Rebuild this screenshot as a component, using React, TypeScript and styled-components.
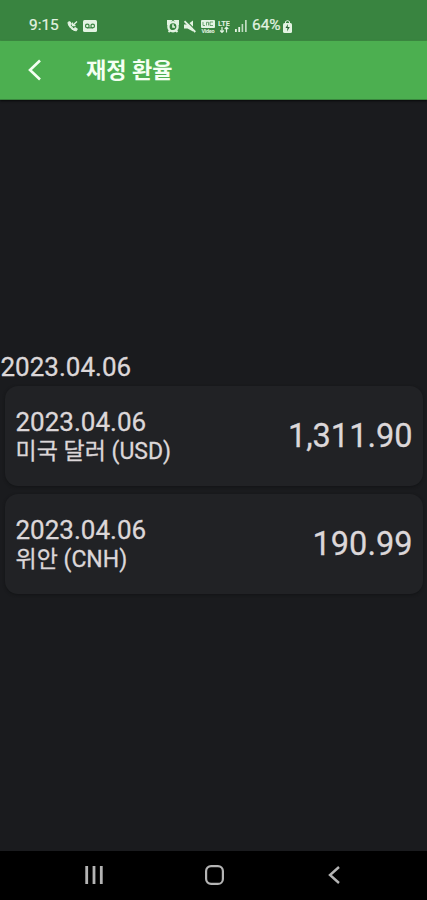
import React from "react";
import styled, { createGlobalStyle } from "styled-components";

const GlobalStyle = createGlobalStyle`
  * { box-sizing: border-box; }
  body { margin: 0; background: #1a1b1e; }
`;

const Screen = styled.div`
  width: 100%;
  height: 900px;
  display: flex;
  flex-direction: column;
  background: #1a1b1e;
  color: #dcd7d9;
  font-family: Roboto, "Noto Sans CJK KR", sans-serif;
  overflow: hidden;
`;

const StatusBar = styled.div`
  height: 41px;
  flex: none;
  padding: 11px 0 0 29px;
  display: flex;
  background: #398440;
  border-bottom: 1px solid #3f9144;
  color: #e3f3e2;
`;

const StatusGroup = styled.div<{ $width: number }>`
  width: ${(p) => p.$width}px;
  height: 30px;
  display: flex;
  align-items: center;
`;

const StatusText = styled.span<{ $width: number }>`
  width: ${(p) => p.$width}px;
  flex: none;
  font-size: 15.4px;
  line-height: 29px;
  height: 30px;
  white-space: nowrap;
  -webkit-text-stroke: 0.2px currentColor;
`;

const StatusIcon = styled.svg<{ $gap?: number }>`
  display: block;
  flex: none;
  margin-right: ${(p) => p.$gap ?? 0}px;
`;

const AppBar = styled.header`
  height: 59px;
  flex: none;
  display: flex;
  align-items: center;
  padding-left: 27px;
  background: #4caf50;
  border-bottom: 1px solid #3a873e;
  color: #f4fff2;
  box-shadow: 0 1px 2px #08090a;
`;

const BackButton = styled.button`
  width: 59px;
  height: 40px;
  padding: 0;
  border: 0;
  background: none;
  color: inherit;
  display: flex;
  align-items: center;
`;

const Title = styled.h1`
  margin: 2px 0 0;
  font-size: 22px;
  line-height: 30px;
  font-weight: 700;
  white-space: nowrap;
`;

const Content = styled.main`
  flex: 1;
  display: flex;
  flex-direction: column;
  padding: 251px 4px 0 5px;
  -webkit-text-stroke: 0.3px currentColor;
`;

const DateHeading = styled.div`
  height: 35px;
  margin-left: -4.5px;
  font-size: 26px;
  line-height: 33px;
`;

const Cards = styled.div`
  display: flex;
  flex-direction: column;
  gap: 8px;
`;

const Card = styled.section`
  height: 100px;
  border-radius: 13px;
  padding: 21px 10.5px 0 10.5px;
  display: flex;
  justify-content: space-between;
  background: #212225;
  box-shadow: 0 1px 3px #131416;
`;

const RateDate = styled.div`
  font-size: 26px;
  line-height: 30px;
  height: 29px;
`;

const RateName = styled.div`
  font-size: 23px;
  line-height: 32px;
  white-space: nowrap;
`;

const RateValue = styled.div`
  font-size: 32.5px;
  line-height: 58px;
`;

const NavBar = styled.nav`
  height: 49px;
  flex: none;
  display: grid;
  grid-template-columns: 120px 120px 120px;
  justify-content: center;
  justify-items: center;
  align-items: center;
  padding: 0 0 2px 1px;
  background: #000;
  color: #b4b4b4;
`;

const NavButton = styled.button`
  padding: 0;
  border: 0;
  background: none;
  color: inherit;
  display: flex;
`;

const rates = [
  { date: "2023.04.06", name: "미국 달러 (USD)", value: "1,311.90" },
  { date: "2023.04.06", name: "위안 (CNH)", value: "190.99" },
];

const CallIcon = () => (
  <StatusIcon $gap={4} width="13" height="13" viewBox="0 0 13 13" fill="none" stroke="currentColor">
    <path d="M2 2.2c-.2 3.9 4.5 8.8 8.5 8.6l.8-2-2.2-1.3-1.3 1.2C6.3 7.9 5.2 6.7 4.4 5.3l1-1.3L4.1 1.7z" fill="currentColor" strokeWidth="1" />
    <path d="M6.500 5.500L11 1.500M6.500 2.500v3h3" strokeWidth="1.300" />
  </StatusIcon>
);

const VoicemailIcon = () => (
  <StatusIcon width="14" height="12" viewBox="0 0 14 12">
    <rect width="14" height="12" rx="1.500" fill="currentColor" />
    <g fill="none" stroke="#398440" strokeWidth="1.200">
      <circle cx="4.300" cy="6" r="1.800" />
      <circle cx="9.700" cy="6" r="1.800" />
      <path d="M4.300 7.800h5.400" />
    </g>
  </StatusIcon>
);

const AlarmIcon = () => (
  <StatusIcon $gap={5} width="12" height="13" viewBox="0 0 12 13">
    <path d="M.5 1h3l-3 3zM11.500 1h-3l3 3zM1.500 12l2-2M10.500 12l-2-2" fill="currentColor" stroke="currentColor" strokeWidth="1.800" />
    <circle cx="6" cy="6.700" r="4.600" fill="#398440" stroke="currentColor" strokeWidth="2.400" />
    <path d="M6 4.200v2.800h2" fill="none" stroke="currentColor" strokeWidth="1.600" />
  </StatusIcon>
);

const MuteIcon = () => (
  <StatusIcon $gap={5} width="12" height="13" viewBox="0 0 12 13">
    <path d="M0 4.500h3.500l5.500-4v11L3.500 8.500H0z" fill="currentColor" />
    <path d="M2.500 1l9.500 9.500" stroke="#398440" strokeWidth="1.200" />
    <path d="M.5 1.200L11.300 12" stroke="currentColor" strokeWidth="1.800" />
  </StatusIcon>
);

const VideoIcon = () => (
  <StatusIcon $gap={3} width="14" height="13" viewBox="0 0 14 13">
    <rect width="14" height="8" rx="1" fill="currentColor" />
    <path d="M2 2v3.500h2M5.500 5.500V2.300h2v3.200M9 2v3.500h3M9 2h3" fill="none" stroke="#398440" strokeWidth=".7" />
    <text x="7" y="13" textAnchor="middle" fontSize="5.500" fontWeight="700" fill="currentColor" fontFamily="Roboto" textLength="13">Video</text>
  </StatusIcon>
);

const LteIcon = () => (
  <StatusIcon $gap={5} width="12" height="14" viewBox="0 0 12 14">
    <text x="0" y="6.500" fontSize="7.500" fontWeight="700" fill="currentColor" fontFamily="Roboto" textLength="12">LTE</text>
    <path d="M4 8v5.500M2.200 11.500L4 13.400l1.800-1.900M8.500 13.500V8M6.700 10l1.800-1.900L10.300 10" stroke="currentColor" strokeWidth="1.200" fill="none" />
  </StatusIcon>
);

const SignalIcon = () => (
  <StatusIcon $gap={5} width="12" height="12" viewBox="0 0 12 12" fill="currentColor">
    <path d="M0 9h1.800v3H0zM3.300 7h1.800v5H3.300z" />
    <path d="M6.600 4h1.600v8H6.600zM10 0h1.700v12H10z" opacity=".8" />
  </StatusIcon>
);

const BatteryIcon = () => (
  <StatusIcon width="9" height="13" viewBox="0 0 9 13">
    <path d="M2.500 3V1.500Q4.500-.3 6.500 1.500V3" fill="none" stroke="currentColor" />
    <rect y="3" width="9" height="10" rx="1.500" fill="currentColor" />
    <path d="M5 4L2.500 8h2L4 11.500 6.800 7H4.700z" fill="#286431" />
  </StatusIcon>
);

export default function App() {
  return (
    <Screen>
      <GlobalStyle />
      <StatusBar>
        <StatusGroup $width={138}>
          <StatusText $width={37}>9:15</StatusText>
          <CallIcon />
          <VoicemailIcon />
        </StatusGroup>
        <StatusGroup $width={140}>
          <AlarmIcon />
          <MuteIcon />
          <VideoIcon />
          <LteIcon />
          <SignalIcon />
          <StatusText $width={31}>64%</StatusText>
          <BatteryIcon />
        </StatusGroup>
      </StatusBar>
      <AppBar>
        <BackButton aria-label="뒤로">
          <svg width="15" height="22" viewBox="0 0 15 22" fill="none" stroke="currentColor" strokeWidth="2.600">
            <path d="M13 1.500L3 11l10 9.500" />
          </svg>
        </BackButton>
        <Title>재정 환율</Title>
      </AppBar>
      <Content>
        <DateHeading>2023.04.06</DateHeading>
        <Cards>
          {rates.map((rate) => (
            <Card key={rate.name}>
              <div>
                <RateDate>{rate.date}</RateDate>
                <RateName>{rate.name}</RateName>
              </div>
              <RateValue>{rate.value}</RateValue>
            </Card>
          ))}
        </Cards>
      </Content>
      <NavBar>
        <NavButton aria-label="최근 앱">
          <svg width="18" height="18" viewBox="0 0 18 18" stroke="currentColor" strokeWidth="2.800">
            <path d="M1.700 0v18M9 0v18M16.300 0v18" />
          </svg>
        </NavButton>
        <NavButton aria-label="홈">
          <svg width="19" height="20" viewBox="0 0 19 20" fill="none" stroke="currentColor" strokeWidth="2.200">
            <rect x="1.100" y="1.100" width="16.800" height="17.800" rx="5" />
          </svg>
        </NavButton>
        <NavButton aria-label="이전">
          <svg width="12" height="18" viewBox="0 0 12 18" fill="none" stroke="currentColor" strokeWidth="2.400">
            <path d="M11 1L2 9l9 8" />
          </svg>
        </NavButton>
      </NavBar>
    </Screen>
  );
}
